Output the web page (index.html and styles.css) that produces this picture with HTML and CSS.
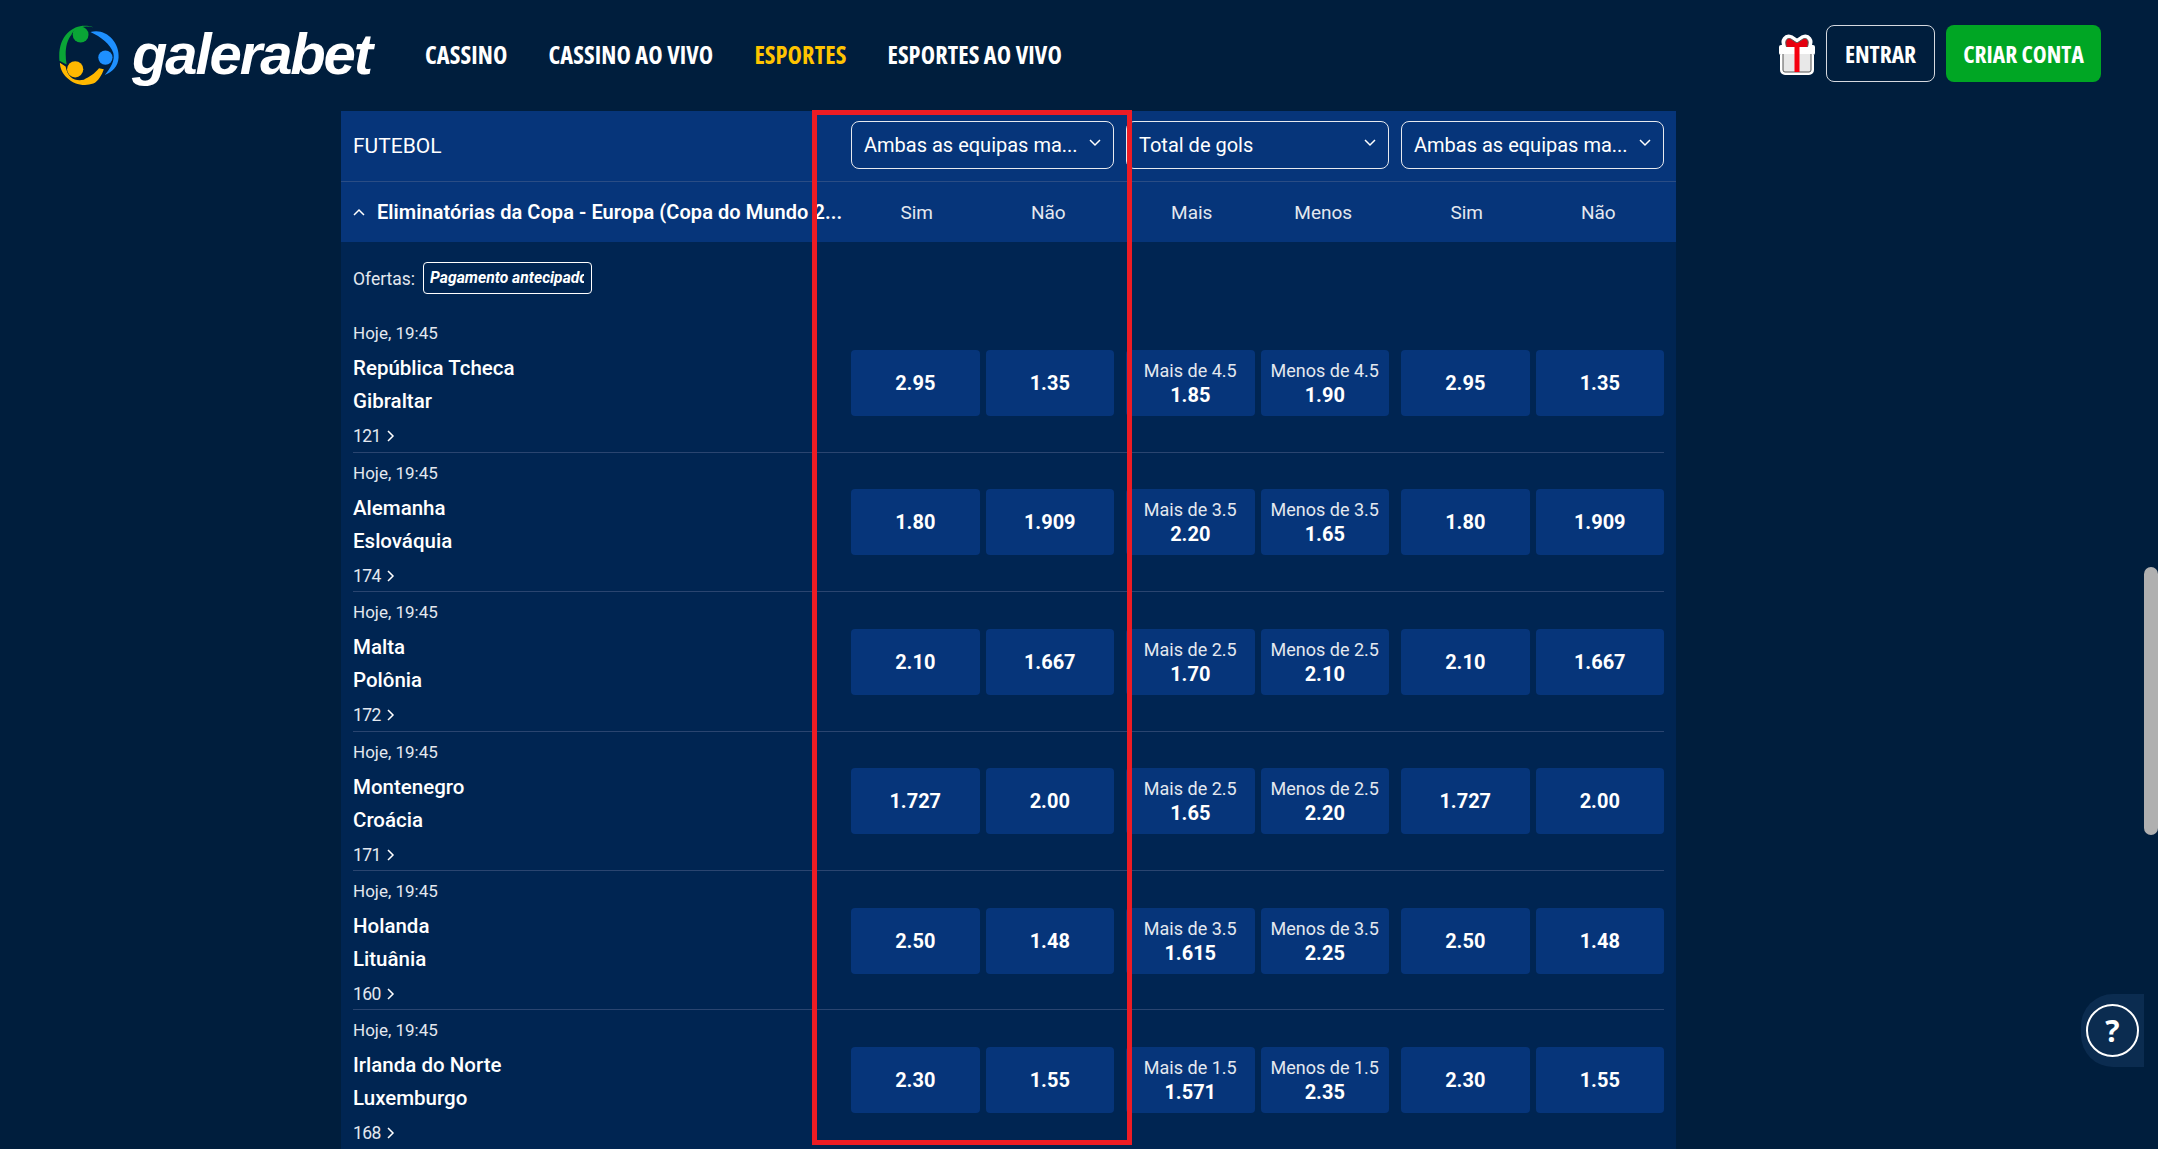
FILE: index.html
```html
<!DOCTYPE html>
<html lang="pt">
<head>
<meta charset="utf-8">
<title>galerabet</title>
<link rel="stylesheet" href="styles.css">
</head>
<body>
<header class="topbar">
  <a class="logo">
    <svg class="logo-mark" viewBox="17 11 65 66" aria-hidden="true">
      <circle cx="40.7" cy="22.7" r="8.3" fill="#0aa536"/>
      <path fill="#0aa536" d="M54 15C38 9 16 20 18.5 50L26 54C24 42 25 30 31 23C33 17 42 12 54 15Z"/>
      <circle cx="66.7" cy="46.7" r="7.5" fill="#1e90ff"/>
      <path fill="#1e90ff" d="M51 20C66 15 82 30 80.5 47C80 56 74 62 66 65C72 58 77 50 75 42C72 33 62 25 51 20Z"/>
      <circle cx="35" cy="59" r="8.5" fill="#ffb800"/>
      <path fill="#ffb800" d="M19 52C19 66 36 80 54 74C59 72 63 65 65 59L60 58C55 64 50 67 44 70C35 72 27 68 25 56Z"/>
    </svg>
    <span class="logo-text">galerabet</span>
  </a>
  <nav class="nav">
    <a class="nav-link">CASSINO</a>
    <a class="nav-link">CASSINO AO VIVO</a>
    <a class="nav-link nav-active">ESPORTES</a>
    <a class="nav-link">ESPORTES AO VIVO</a>
  </nav>
  <div class="actions">
    <svg class="gift" viewBox="0 0 38 42" aria-hidden="true">
      <path d="M7 13C3 6 8 1 13 3l6 4 6-4c5-2 10 3 6 10h4v6h-1v17a3 3 0 0 1-3 3H7a3 3 0 0 1-3-3V19H3v-6z" fill="#fff" stroke="#fff" stroke-width="4" stroke-linejoin="round"/>
      <path d="M9 14C6 7 9 3 13 5l6 4 6-4c4-2 7 2 4 9z" fill="#e3000f" stroke="#555" stroke-width="1"/>
      <path d="M5 19h28v17a2 2 0 0 1-2 2H7a2 2 0 0 1-2-2z" fill="#e8e8e8" stroke="#555" stroke-width="1"/>
      <rect x="4" y="13" width="30" height="7" fill="#fff"/>
      <rect x="16.500" y="9" width="5" height="29" fill="#f5000f"/>
    </svg>
    <a class="btn btn-login">ENTRAR</a>
    <a class="btn btn-signup">CRIAR CONTA</a>
  </div>
</header>

<main class="panel">
  <div class="panel-head">
    <div class="sport">FUTEBOL</div>
    <div class="select"><span>Ambas as equipas ma...</span><svg class="chev" viewBox="0 0 12 8"><path d="M1 1l5 5 5-5"/></svg></div>
    <div class="select"><span>Total de gols</span><svg class="chev" viewBox="0 0 12 8"><path d="M1 1l5 5 5-5"/></svg></div>
    <div class="select"><span>Ambas as equipas ma...</span><svg class="chev" viewBox="0 0 12 8"><path d="M1 1l5 5 5-5"/></svg></div>
  </div>
  <div class="league-head">
    <div class="league"><svg class="chev-up" viewBox="0 0 12 8"><path d="M1 7l5-5 5 5"/></svg><span>Eliminatórias da Copa - Europa (Copa do Mundo 2...</span></div>
    <div class="labels"><span>Sim</span><span>Não</span></div>
    <div class="labels"><span>Mais</span><span>Menos</span></div>
    <div class="labels"><span>Sim</span><span>Não</span></div>
  </div>
  <div class="offers"><span>Ofertas:</span><span class="tag"><b>Pagamento antecipado</b></span></div>

  <div class="row">
    <div class="match"><div class="time">Hoje, 19:45</div><div class="team">República Tcheca</div><div class="team">Gibraltar</div><div class="count">121<svg class="chev-right" viewBox="0 0 8 12"><path d="M1 1l5 5-5 5"/></svg></div></div>
    <div class="odds"><a class="odd"><b>2.95</b></a><a class="odd"><b>1.35</b></a></div>
    <div class="odds"><a class="odd"><span>Mais de 4.5</span><b>1.85</b></a><a class="odd"><span>Menos de 4.5</span><b>1.90</b></a></div>
    <div class="odds"><a class="odd"><b>2.95</b></a><a class="odd"><b>1.35</b></a></div>
  </div>
  <div class="row">
    <div class="match"><div class="time">Hoje, 19:45</div><div class="team">Alemanha</div><div class="team">Eslováquia</div><div class="count">174<svg class="chev-right" viewBox="0 0 8 12"><path d="M1 1l5 5-5 5"/></svg></div></div>
    <div class="odds"><a class="odd"><b>1.80</b></a><a class="odd"><b>1.909</b></a></div>
    <div class="odds"><a class="odd"><span>Mais de 3.5</span><b>2.20</b></a><a class="odd"><span>Menos de 3.5</span><b>1.65</b></a></div>
    <div class="odds"><a class="odd"><b>1.80</b></a><a class="odd"><b>1.909</b></a></div>
  </div>
  <div class="row">
    <div class="match"><div class="time">Hoje, 19:45</div><div class="team">Malta</div><div class="team">Polônia</div><div class="count">172<svg class="chev-right" viewBox="0 0 8 12"><path d="M1 1l5 5-5 5"/></svg></div></div>
    <div class="odds"><a class="odd"><b>2.10</b></a><a class="odd"><b>1.667</b></a></div>
    <div class="odds"><a class="odd"><span>Mais de 2.5</span><b>1.70</b></a><a class="odd"><span>Menos de 2.5</span><b>2.10</b></a></div>
    <div class="odds"><a class="odd"><b>2.10</b></a><a class="odd"><b>1.667</b></a></div>
  </div>
  <div class="row">
    <div class="match"><div class="time">Hoje, 19:45</div><div class="team">Montenegro</div><div class="team">Croácia</div><div class="count">171<svg class="chev-right" viewBox="0 0 8 12"><path d="M1 1l5 5-5 5"/></svg></div></div>
    <div class="odds"><a class="odd"><b>1.727</b></a><a class="odd"><b>2.00</b></a></div>
    <div class="odds"><a class="odd"><span>Mais de 2.5</span><b>1.65</b></a><a class="odd"><span>Menos de 2.5</span><b>2.20</b></a></div>
    <div class="odds"><a class="odd"><b>1.727</b></a><a class="odd"><b>2.00</b></a></div>
  </div>
  <div class="row">
    <div class="match"><div class="time">Hoje, 19:45</div><div class="team">Holanda</div><div class="team">Lituânia</div><div class="count">160<svg class="chev-right" viewBox="0 0 8 12"><path d="M1 1l5 5-5 5"/></svg></div></div>
    <div class="odds"><a class="odd"><b>2.50</b></a><a class="odd"><b>1.48</b></a></div>
    <div class="odds"><a class="odd"><span>Mais de 3.5</span><b>1.615</b></a><a class="odd"><span>Menos de 3.5</span><b>2.25</b></a></div>
    <div class="odds"><a class="odd"><b>2.50</b></a><a class="odd"><b>1.48</b></a></div>
  </div>
  <div class="row">
    <div class="match"><div class="time">Hoje, 19:45</div><div class="team">Irlanda do Norte</div><div class="team">Luxemburgo</div><div class="count">168<svg class="chev-right" viewBox="0 0 8 12"><path d="M1 1l5 5-5 5"/></svg></div></div>
    <div class="odds"><a class="odd"><b>2.30</b></a><a class="odd"><b>1.55</b></a></div>
    <div class="odds"><a class="odd"><span>Mais de 1.5</span><b>1.571</b></a><a class="odd"><span>Menos de 1.5</span><b>2.35</b></a></div>
    <div class="odds"><a class="odd"><b>2.30</b></a><a class="odd"><b>1.55</b></a></div>
  </div>
</main>

<div class="highlight"></div>
<div class="scroll-thumb"></div>
<div class="help"><span class="help-ring">?</span></div>
</body>
</html>
```

FILE: styles.css
```css
* { box-sizing: border-box; }
html, body { height: 100%; }
body {
  margin: 0;
  height: 1149px;
  overflow: hidden;
  background: #001e3d;
  color: #fff;
  font-family: Roboto, "Liberation Sans", sans-serif;
  position: relative;
}

/* top bar */
.topbar {
  height: 111px;
  display: flex;
  align-items: center;
  padding: 0 57px 0 58px;
}
.logo { display: flex; align-items: center; gap: 12px; }
.logo-mark { width: 62px; height: 64px; margin-top: -2px; }
.logo-text {
  font-family: "Liberation Sans", sans-serif;
  font-style: italic;
  font-weight: 700;
  font-size: 58px;
  letter-spacing: -2.100px;
  line-height: 64px;
  margin-top: -3px;
}
.nav { display: flex; gap: 41px; margin-left: 54px; margin-top: -2px; }
.nav-link {
  font-family: "Open Sans", Roboto, sans-serif;
  font-stretch: 75%;
  font-weight: 700;
  font-size: 24.300px;
  letter-spacing: 0.100px;
  white-space: nowrap;
}
.nav-active { color: #ffc400; }
.actions { margin-left: auto; margin-top: -4px; display: flex; align-items: center; }
.gift { width: 38px; height: 42px; margin-right: 10px; margin-top: 2px; }
.btn {
  height: 57px;
  border-radius: 8px;
  display: flex;
  align-items: center;
  justify-content: center;
  font-family: "Open Sans", Roboto, sans-serif;
  font-stretch: 75%;
  font-weight: 700;
  font-size: 23.500px;
  white-space: nowrap;
}
.btn-login { width: 109px; border: 1px solid #d5d9df; margin-right: 11px; }
.btn-signup { width: 155px; background: #00a624; }

/* table panel */
.panel {
  width: 1335px;
  margin-left: 341px;
  background: #002552;
  padding-bottom: 20px;
}
.panel-head, .league-head, .row {
  display: grid;
  grid-template-columns: 1fr 263px 263px 263px;
  column-gap: 12px;
  padding: 0 12px 0 12px;
  align-items: center;
}
.panel-head {
  height: 71px;
  background: #06357a;
  border-bottom: 1px solid #2a4d85;
}
.sport { font-size: 21px; }
.select {
  height: 48px;
  border: 1px solid #e6e9ef;
  border-radius: 8px;
  display: flex;
  align-items: center;
  justify-content: space-between;
  padding: 0 12px;
  font-size: 20px;
  margin-top: -3px;
  white-space: nowrap;
}
.chev, .chev-up, .chev-right { fill: none; stroke: #fff; stroke-width: 1.500; }
.chev { width: 12px; height: 8px; margin-top: -4px; }
.league-head { height: 60px; background: #06357a; }
.league { display: flex; align-items: center; gap: 12px; font-weight: 600; font-size: 20px; letter-spacing: 0.060px; white-space: nowrap; margin-right: -12px; }
.chev-up { width: 12px; height: 8px; }
.labels { display: grid; grid-template-columns: 1fr 1fr; text-align: center; font-size: 19px; line-height: 26px; padding-top: 1px; color: #e3e8ef; }
.offers {
  height: 71.400px;
  padding: 20px 12px 0;
  display: flex;
  gap: 8px;
  font-size: 17.500px;
  color: #e3e8ef;
}
.offers span:first-child { line-height: 34px; }
.tag {
  width: 169px;
  height: 32px;
  border: 1px solid #fff;
  border-radius: 4px;
  padding: 0 7px 0 6px;
  white-space: nowrap;
  color: #fff;
  font-style: italic;
  font-size: 15.700px;
  line-height: 29px;
}
.tag b { display: block; overflow: hidden; }
.row {
  height: 139.400px;
  position: relative;
}
.row::after {
  content: "";
  position: absolute;
  left: 12px;
  right: 12px;
  bottom: 0;
  height: 1px;
  background: #2a4570;
}
.match { align-self: start; padding-top: 8px; }
.time { font-size: 17px; line-height: 24px; color: #e3e8ef; }
.team { font-size: 20.500px; font-weight: 500; line-height: 33px; }
.time + .team { margin-top: 7px; }
.count { display: flex; align-items: center; gap: 6px; margin-top: 6px; font-size: 17.500px; letter-spacing: -0.600px; line-height: 24px; color: #e3e8ef; }
.chev-right { width: 8px; height: 12px; }
.odds { display: grid; grid-template-columns: 1fr 1fr; column-gap: 6px; }
.odd {
  height: 66px;
  background: #06357a;
  border-radius: 4px;
  display: flex;
  flex-direction: column;
  align-items: center;
  justify-content: center;
  line-height: 24px;
}
.odd b { font-size: 20px; font-weight: 700; }
.odd span { font-size: 18px; color: #e3e8ef; white-space: nowrap; }

/* overlays */
.highlight {
  position: absolute;
  left: 812px;
  top: 110px;
  width: 320px;
  height: 1035px;
  border: 5px solid #ed1c24;
  pointer-events: none;
}
.scroll-thumb {
  position: absolute;
  left: 2144px;
  top: 567px;
  width: 14px;
  height: 268px;
  border-radius: 7px;
  background: #b0b0b0;
}
.help {
  position: absolute;
  left: 2081px;
  top: 994px;
  width: 63px;
  height: 73px;
  background: #0b2c50;
  border-radius: 32px 0 0 32px;
  display: flex;
  align-items: center;
  padding-left: 5px;
}
.help-ring {
  width: 53px;
  height: 53px;
  border: 2px solid #fff;
  border-radius: 50%;
  display: flex;
  align-items: center;
  justify-content: center;
  font-family: "Open Sans", sans-serif;
  font-weight: 700;
  font-size: 30px;
}
```
